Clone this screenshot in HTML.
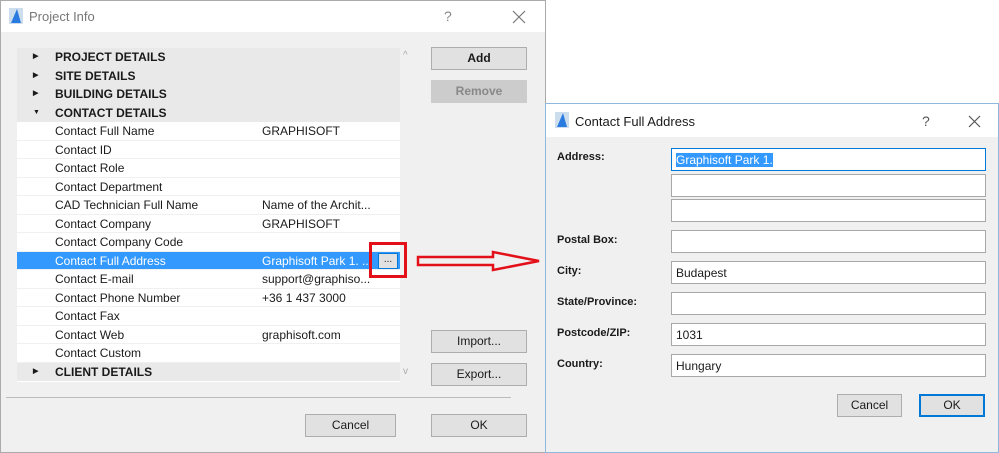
<!DOCTYPE html><html><head><style>
*{box-sizing:border-box;margin:0;padding:0}
body{width:999px;height:453px;position:relative;background:#fff;font-family:"Liberation Sans",sans-serif;font-size:12px;color:#1a1a1a;overflow:hidden}
.abs{position:absolute}
.btn{position:absolute;background:#e1e1e1;border:1px solid #adadad;text-align:center;font-size:12px;line-height:20px}
.row{position:absolute;left:17px;width:383px;height:18.5px;line-height:18px;background:#fff;border-bottom:1px solid #f0f0f0}
.row .n{position:absolute;left:38px}
.row .v{position:absolute;left:245px}
.grp{background:#e9e9e9;font-weight:bold;border-bottom:none}
.tri{position:absolute;left:16px;top:0;font-size:7px}
.fld{position:absolute;left:671px;width:315px;height:23px;background:#fff;border:1px solid #a8a8a8;padding-left:4px;line-height:23px}
.lbl{position:absolute;left:557px;font-weight:bold;font-size:11px}
</style></head><body>
<div class="abs" style="left:0;top:0;width:546px;height:453px;background:#f0f0f0;border:1px solid #aaa"></div>
<div class="abs" style="left:1px;top:1px;width:544px;height:31px;background:#fff"></div>
<svg class="abs" style="left:9px;top:8px" width="14" height="16"><rect width="14" height="16" fill="#cde"/><path d="M2 15 L8 1 L12 15Z" fill="#2a7be0"/></svg>
<div class="abs" style="left:29px;top:9px;font-size:13px;color:#777">Project Info</div>
<div class="abs" style="left:444px;top:8px;font-size:14px;color:#888">?</div>
<svg class="abs" style="left:512px;top:10px" width="14" height="14"><path d="M1 1L13 13M13 1L1 13" stroke="#777" stroke-width="1.2"/></svg>
<div class="abs" style="left:17px;top:48px;width:401px;height:334px;background:#fff"></div>
<div class="abs" style="left:400px;top:48px;width:18px;height:334px;background:#f0f0f0"></div>
<div class="abs" style="left:403px;top:50px;font-size:10px;color:#aaa">^</div>
<div class="abs" style="left:403px;top:366px;font-size:10px;color:#aaa">v</div>
<div class="row grp" style="top:48px"><span class="tri">▶</span><span class="n">PROJECT DETAILS</span></div>
<div class="row grp" style="top:66.5px"><span class="tri">▶</span><span class="n">SITE DETAILS</span></div>
<div class="row grp" style="top:85px"><span class="tri">▶</span><span class="n">BUILDING DETAILS</span></div>
<div class="row grp" style="top:103.5px"><span class="tri">▼</span><span class="n">CONTACT DETAILS</span></div>
<div class="row" style="top:122px"><span class="n">Contact Full Name</span><span class="v">GRAPHISOFT</span></div>
<div class="row" style="top:140.5px"><span class="n">Contact ID</span></div>
<div class="row" style="top:159px"><span class="n">Contact Role</span></div>
<div class="row" style="top:177.5px"><span class="n">Contact Department</span></div>
<div class="row" style="top:196px"><span class="n">CAD Technician Full Name</span><span class="v">Name of the Archit...</span></div>
<div class="row" style="top:214.5px"><span class="n">Contact Company</span><span class="v">GRAPHISOFT</span></div>
<div class="row" style="top:233px"><span class="n">Contact Company Code</span></div>
<div class="row" style="top:251.5px;background:#3399ff;color:#fff"><span class="n">Contact Full Address</span><span class="v">Graphisoft Park 1. ...</span></div>
<div class="row" style="top:270px"><span class="n">Contact E-mail</span><span class="v">support@graphiso...</span></div>
<div class="row" style="top:288.5px"><span class="n">Contact Phone Number</span><span class="v">+36 1 437 3000</span></div>
<div class="row" style="top:307px"><span class="n">Contact Fax</span></div>
<div class="row" style="top:325.5px"><span class="n">Contact Web</span><span class="v">graphisoft.com</span></div>
<div class="row" style="top:344px"><span class="n">Contact Custom</span></div>
<div class="row grp" style="top:362.5px"><span class="tri">▶</span><span class="n">CLIENT DETAILS</span></div>
<div class="abs" style="left:378px;top:253px;width:20px;height:16px;background:#e1e1e1;border:1px solid #0078d7;font-size:10px;text-align:center;line-height:12px">...</div>
<div class="abs" style="left:369px;top:242px;width:38px;height:36px;border:3px solid #e3101a"></div>
<svg class="abs" style="left:415px;top:248px" width="130" height="28"><path d="M3 9 L78 9 L78 4 L124 13 L78 22 L78 17 L3 17 Z" fill="none" stroke="#e3101a" stroke-width="2.5"/></svg>
<div class="btn" style="left:431px;top:47px;width:96px;height:23px;font-weight:bold">Add</div>
<div class="btn" style="left:431px;top:80px;width:96px;height:23px;background:#ccc;border-color:#ccc;color:#888;font-weight:bold">Remove</div>
<div class="btn" style="left:431px;top:330px;width:96px;height:23px">Import...</div>
<div class="btn" style="left:431px;top:363px;width:96px;height:23px">Export...</div>
<div class="abs" style="left:6px;top:397px;width:505px;height:1px;background:#bbb"></div>
<div class="btn" style="left:305px;top:414px;width:91px;height:23px">Cancel</div>
<div class="btn" style="left:431px;top:414px;width:96px;height:23px">OK</div>

<div class="abs" style="left:545px;top:103px;width:454px;height:350px;background:#f0f0f0;border:1px solid #8fb8dc"></div>
<div class="abs" style="left:546px;top:104px;width:452px;height:33px;background:#fff"></div>
<svg class="abs" style="left:555px;top:112px" width="14" height="16"><rect width="14" height="16" fill="#cde"/><path d="M2 15 L8 1 L12 15Z" fill="#2a7be0"/></svg>
<div class="abs" style="left:575px;top:114px;font-size:13px">Contact Full Address</div>
<div class="abs" style="left:922px;top:113px;font-size:14px;color:#555">?</div>
<svg class="abs" style="left:968px;top:115px" width="13" height="13"><path d="M1 1L12 12M12 1L1 12" stroke="#555" stroke-width="1.2"/></svg>
<div class="lbl" style="top:151px">Address:</div>
<div class="fld" style="top:148px;border-color:#0078d7"><span style="background:#3399ff;color:#fff">Graphisoft Park 1.</span></div>
<div class="fld" style="top:174px"></div>
<div class="fld" style="top:199px"></div>
<div class="lbl" style="top:234px">Postal Box:</div>
<div class="fld" style="top:230px"></div>
<div class="lbl" style="top:265px">City:</div>
<div class="fld" style="top:261px">Budapest</div>
<div class="lbl" style="top:296px">State/Province:</div>
<div class="fld" style="top:292px"></div>
<div class="lbl" style="top:327px">Postcode/ZIP:</div>
<div class="fld" style="top:323px">1031</div>
<div class="lbl" style="top:358px">Country:</div>
<div class="fld" style="top:354px">Hungary</div>
<div class="btn" style="left:837px;top:394px;width:65px;height:23px">Cancel</div>
<div class="btn" style="left:919px;top:394px;width:66px;height:23px;border:2px solid #0078d7;line-height:19px">OK</div>
</body></html>
